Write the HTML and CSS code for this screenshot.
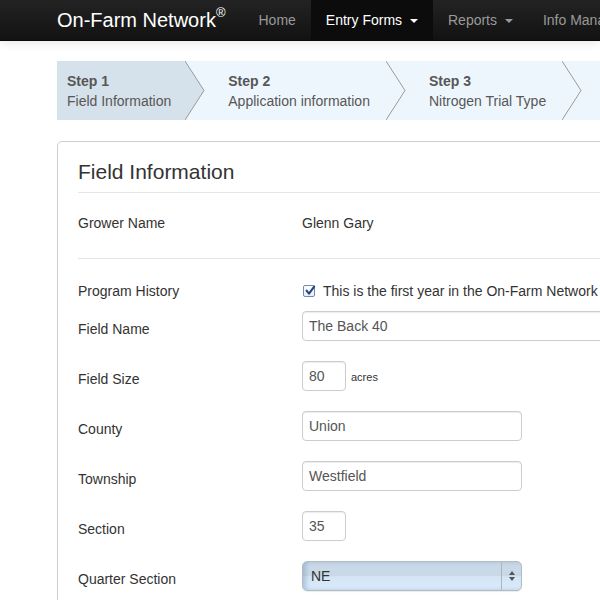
FILE: index.html
```html
<!DOCTYPE html>
<html>
<head>
<meta charset="utf-8">
<title>On-Farm Network</title>
<link rel="stylesheet" href="styles.css">
</head>
<body>
<header class="navbar">
  <div class="nav-inner">
    <a class="brand">On-Farm Network<sup>®</sup></a>
    <ul class="nav">
      <li><a>Home</a></li>
      <li class="active"><a>Entry Forms <b class="caret"></b></a></li>
      <li><a>Reports <b class="caret"></b></a></li>
      <li><a>Info Management</a></li>
    </ul>
  </div>
</header>

<main class="container">
  <ol class="steps">
    <li class="step current">
      <strong>Step 1</strong>
      <span>Field Information</span>
      <svg class="chev" viewBox="0 0 20 59" preserveAspectRatio="none"><polygon points="0,0 19,29.5 0,59" fill="#d6e2eb"/><polyline points="0,0 19,29.5 0,59" fill="none" stroke="#9a9a9a" stroke-width="1"/></svg>
    </li>
    <li class="step">
      <strong>Step 2</strong>
      <span>Application information</span>
      <svg class="chev" viewBox="0 0 20 59" preserveAspectRatio="none"><polygon points="0,0 19,29.5 0,59" fill="#eef6fd"/><polyline points="0,0 19,29.5 0,59" fill="none" stroke="#9a9a9a" stroke-width="1"/></svg>
    </li>
    <li class="step">
      <strong>Step 3</strong>
      <span>Nitrogen Trial Type</span>
      <svg class="chev" viewBox="0 0 20 59" preserveAspectRatio="none"><polygon points="0,0 19,29.5 0,59" fill="#eef6fd"/><polyline points="0,0 19,29.5 0,59" fill="none" stroke="#9a9a9a" stroke-width="1"/></svg>
    </li>
  </ol>

  <section class="panel">
    <h2 class="panel-title">Field Information</h2>
    <hr class="rule rule-head">
    <div class="row row-static">
      <div class="label">Grower Name</div>
      <div class="value">Glenn Gary</div>
    </div>
    <hr class="rule rule-mid">
    <div class="row row-check">
      <div class="label">Program History</div>
      <label class="check">
        <span class="box"><svg viewBox="0 0 12 12" width="12" height="12"><path d="M2.6 5.6 L5 8.6 L10.2 1.6" fill="none" stroke="#22468a" stroke-width="2.1" stroke-linecap="round" stroke-linejoin="round"/></svg></span>
        This is the first year in the On-Farm Network
      </label>
    </div>
    <div class="row">
      <div class="label lbl-input">Field Name</div>
      <div class="control"><input class="input input-xl" type="text" value="The Back 40"></div>
    </div>
    <div class="row">
      <div class="label lbl-input">Field Size</div>
      <div class="control"><input class="input input-mini" type="text" value="80"><span class="unit">acres</span></div>
    </div>
    <div class="row">
      <div class="label lbl-input">County</div>
      <div class="control"><input class="input input-med" type="text" value="Union"></div>
    </div>
    <div class="row">
      <div class="label lbl-input">Township</div>
      <div class="control"><input class="input input-med" type="text" value="Westfield"></div>
    </div>
    <div class="row">
      <div class="label lbl-input">Section</div>
      <div class="control"><input class="input input-mini" type="text" value="35"></div>
    </div>
    <div class="row">
      <div class="label lbl-input">Quarter Section</div>
      <div class="control">
        <span class="select-wrap">
          <select class="select"><option>NE</option><option>NW</option><option>SE</option><option>SW</option></select>
          <span class="select-arrows"><svg viewBox="0 0 8 14" width="8" height="14"><polygon points="1,6 4,2 7,6" fill="#555"/><polygon points="1,8 4,12 7,8" fill="#555"/></svg></span>
        </span>
      </div>
    </div>
  </section>
</main>
</body>
</html>
```

FILE: styles.css
```css
html, body {
  overflow: hidden;
}
body {
  margin: 0;
  font-family: "Liberation Sans", Arial, sans-serif;
  font-size: 14px;
  line-height: 20px;
  color: #333;
  background: #fff;
}

/* Navbar */
.navbar {
  height: 40px;
  background: linear-gradient(#232323, #121212);
  border-bottom: 1px solid #0a0a0a;
  box-shadow: 0 1px 10px rgba(0,0,0,0.12);
}
.nav-inner {
  display: flex;
  align-items: stretch;
  padding-left: 57px;
  white-space: nowrap;
  height: 40px;
}
.brand {
  color: #fff;
  font-size: 20px;
  line-height: 20px;
  padding: 10px 0;
  margin-right: 18px;
}
.brand sup {
  font-size: 13px;
  line-height: 0;
  position: relative;
  top: -2px;
}
.nav {
  display: flex;
  list-style: none;
  margin: 0;
  padding: 0;
}
.nav li a {
  display: block;
  padding: 10px 15px;
  color: #999;
  line-height: 20px;
}
.nav li.active a {
  background: #0c0c0c;
  color: #fff;
}
.caret {
  display: inline-block;
  width: 0;
  height: 0;
  vertical-align: middle;
  margin-left: 4px;
  margin-top: -1px;
  border-top: 4px solid #999;
  border-left: 4px solid transparent;
  border-right: 4px solid transparent;
}
.active .caret {
  border-top-color: #fff;
}

/* Container */
.container {
  padding: 20px 0 0 57px;
  width: 1000px;
}

/* Steps */
.steps {
  display: flex;
  list-style: none;
  margin: 0 0 21px 0;
  padding: 0;
  background: #eef6fd;
  height: 59px;
  white-space: nowrap;
}
.step {
  position: relative;
  padding: 10px 16px 9px 43px;
  color: #575757;
}
.step.current {
  background: #d6e2eb;
  padding-left: 10px;
  padding-right: 14px;
}
.step strong, .step span {
  display: block;
}
.chev {
  position: absolute;
  top: 0;
  left: 100%;
  width: 20px;
  height: 59px;
  z-index: 1;
}

/* Panel */
.panel {
  border: 1px solid #cfcfcf;
  border-radius: 5px;
  padding: 15px 20px 0 20px;
  width: 860px;
  height: 600px;
}
.panel-title {
  margin: 0;
  font-size: 21px;
  font-weight: normal;
  line-height: 30px;
  color: #333;
}
.rule {
  border: 0;
  border-top: 1px solid #e5e5e5;
  margin: 0;
}
.rule-head {
  margin-top: 5px;
  margin-bottom: 20px;
}
.rule-mid {
  margin-top: 25px;
  margin-bottom: 22px;
}
.row {
  display: grid;
  grid-template-columns: 224px 1fr;
  align-items: start;
  margin-bottom: 20px;
}
.row-static {
  margin-bottom: 0;
}
.row-check {
  margin-bottom: 10px;
}
.lbl-input {
  padding-top: 8px;
}
.value {
  color: #333;
}
.check {
  display: flex;
  align-items: center;
  color: #333;
}
.box {
  width: 10px;
  height: 10px;
  border: 1px solid #7089ad;
  border-radius: 2px;
  background: linear-gradient(#fdfdfd, #e9eef5);
  margin: 0 8px 0 1px;
  position: relative;
}
.box svg {
  position: absolute;
  left: 0;
  top: -1px;
}
.control {
  display: flex;
  align-items: center;
}
.input {
  box-sizing: border-box;
  height: 30px;
  padding: 4px 6px;
  border: 1px solid #ccc;
  border-radius: 4px;
  font-family: "Liberation Sans", Arial, sans-serif;
  font-size: 14px;
  color: #555;
  box-shadow: inset 0 1px 1px rgba(0,0,0,0.075);
  background: #fff;
}
.input-xl { width: 400px; }
.input-med { width: 220px; }
.input-mini { width: 44px; }
.unit {
  font-size: 11px;
  margin-left: 5px;
  margin-top: 1px;
  color: #333;
}

.select-wrap {
  position: relative;
  display: inline-block;
  width: 220px;
  height: 30px;
}
.select {
  appearance: none;
  -webkit-appearance: none;
  box-sizing: border-box;
  width: 220px;
  height: 30px;
  border: 1px solid #b3bcc6;
  border-radius: 5px;
  padding: 0 8px;
  font-family: "Liberation Sans", Arial, sans-serif;
  font-size: 14px;
  color: #333;
  background: linear-gradient(#cbdae8 0%, #c8d8e7 48%, #d3e4f5 52%, #dcecfb 100%);
  box-shadow: inset 3px 0 4px rgba(90,130,170,0.35), 0 1px 1px rgba(0,0,0,0.08);
}
.select-arrows {
  position: absolute;
  top: 1px;
  right: 1px;
  width: 19px;
  height: 28px;
  border-left: 1px solid #a9b6c2;
  display: flex;
  align-items: center;
  justify-content: center;
  pointer-events: none;
}
```
